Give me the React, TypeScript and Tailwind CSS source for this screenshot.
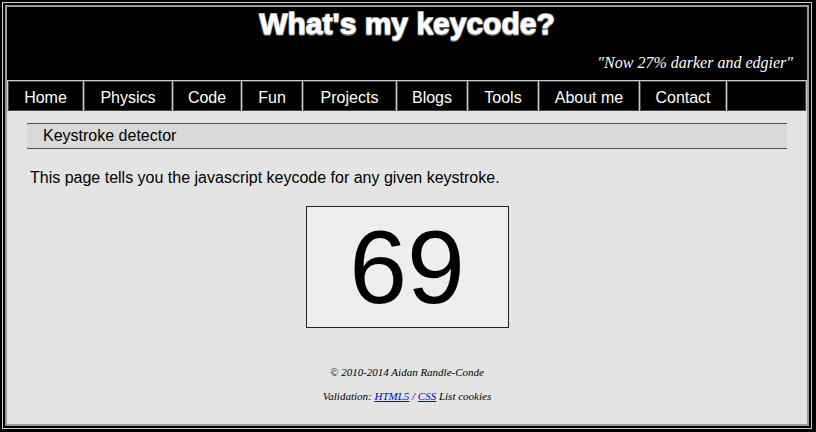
import { FC } from 'react';

const navItems = [
  { label: 'Home', w: 'w-[75px]' },
  { label: 'Physics', w: 'w-[88px]' },
  { label: 'Code', w: 'w-[68px]' },
  { label: 'Fun', w: 'w-[60px]' },
  { label: 'Projects', w: 'w-[93px]' },
  { label: 'Blogs', w: 'w-[70px]' },
  { label: 'Tools', w: 'w-[70px]' },
  { label: 'About me', w: 'w-[100px]' },
  { label: 'Contact', w: 'w-[86px]' },
];

const App: FC = () => {
  return (
    <div className="w-[816px] h-[432px] bg-black pt-[2px] pl-[2px] pr-[4px] pb-[3px] font-['Liberation_Sans',Arial,sans-serif]">
      <div className="h-full border border-[#d0d0d0] bg-black p-[2px]">
        <div className="h-full border-2 border-[#999] bg-[#e4e4e4] flex flex-col">
          {/* header */}
          <div className="h-[73px] bg-black flex flex-col">
            <h1 className="mt-[2px] text-center text-white font-bold text-[30px] leading-[30px] [-webkit-text-stroke:0.8px_white] [text-shadow:-1px_-1px_0_#666,1px_-1px_0_#666,-1px_1px_0_#666,1px_1px_0_#666,0_2px_0_#555]">
              What's my keycode?
            </h1>
            <p className="mt-[14px] pr-[14px] text-right text-white italic text-[16px] leading-[20px] font-['Liberation_Serif','Times_New_Roman',serif]">
              "Now 27% darker and edgier"
            </p>
          </div>

          {/* nav */}
          <div className="flex gap-[1px] bg-[#c8c8c8] pt-[1px] pl-[1px] pr-[1px]">
            {navItems.map((item) => (
              <a
                key={item.label}
                href="#"
                className={`${item.w} h-[30px] pt-[3px] flex items-center justify-center bg-black border border-[#444] text-white text-[16px]`}
              >
                {item.label}
              </a>
            ))}
            <div className="flex-1 h-[30px] bg-black border border-[#444]" />
          </div>

          {/* content */}
          <div className="flex-1 flex flex-col">
            <div className="mt-[12px] mx-[20px] h-[26px] flex items-center pl-[16px] bg-[#d9d9d9] border-y border-[#555] text-[16px] text-black">
              Keystroke detector
            </div>
            <p className="mt-[19px] px-[23px] text-[16px] leading-[20px] text-black">
              This page tells you the javascript keycode for any given keystroke.
            </p>
            <div className="mt-[18px] mx-auto w-[203px] h-[122px] flex items-center justify-center bg-[#eeeeee] border border-[#222]">
              <span className="text-[104px] leading-none text-black">69</span>
            </div>
            <div className="mt-[37px] text-center italic text-[11px] leading-[14px] text-black font-['Liberation_Serif','Times_New_Roman',serif]">
              <p>© 2010-2014 Aidan Randle-Conde</p>
              <p className="mt-[10px]">
                Validation: <a href="#" className="text-[#0000ee] underline">HTML5</a> /{' '}
                <a href="#" className="text-[#0000ee] underline">CSS</a> List cookies
              </p>
            </div>
          </div>
        </div>
      </div>
    </div>
  );
};

export default App;
